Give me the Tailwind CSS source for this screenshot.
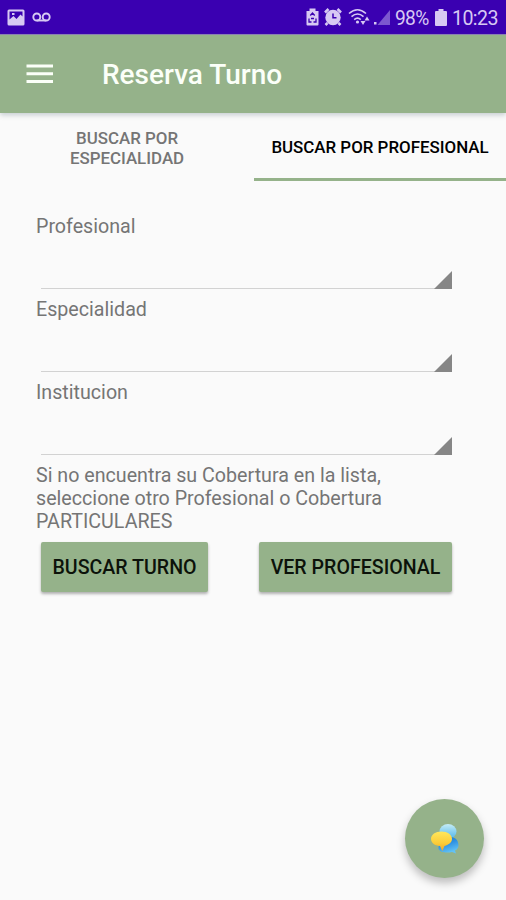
<!DOCTYPE html>
<html lang="es">
<head>
<meta charset="utf-8">
<title>Reserva Turno</title>
<script src="https://cdn.jsdelivr.net/npm/@tailwindcss/browser@4"></script>
</head>
<body class="bg-[#fafafa]">
<div class="relative flex h-[900px] w-[506px] flex-col overflow-hidden bg-[#fafafa] font-['Roboto',sans-serif] text-[#757575]">
  <div class="flex h-[34px] shrink-0 items-center bg-[#3a00b1] pl-[7px] pr-2 text-[#d7c9f3]">
    <svg class="h-[17px] w-[18px]" viewBox="0 0 18 17"><path fill="currentColor" fill-rule="evenodd" d="M2 .5h14a1.500 1.500 0 0 1 1.500 1.500v13a1.500 1.500 0 0 1-1.500 1.500H2A1.500 1.500 0 0 1 .5 15V2A1.500 1.500 0 0 1 2 .5zM2.500 2.500v8l4-3.500 3 3 4-4.500 2 2v-5zM5 4h2.500v2H5z"/></svg>
    <svg class="ml-[7px] h-[11px] w-[19px]" viewBox="0 0 19 11" fill="none" stroke="currentColor" stroke-width="1.900"><circle cx="4.800" cy="5" r="3.500"/><circle cx="14.200" cy="5" r="3.500"/><path d="M4.800 8.500h9.400"/></svg>
    <div class="ml-auto flex items-center">
      <svg class="h-[18px] w-[13px]" viewBox="0 0 13 18"><path fill="currentColor" d="M3.500 .5h6V3h3v13.500a1 1 0 0 1-1 1h-10a1 1 0 0 1-1-1V3h3z"/><path fill="none" stroke="#3a00b1" stroke-width="1.300" d="M4.300 7.500L6.500 5l2.200 2.500M3 10.500v3.500h2.500M10 10.500v3.500H7.500M5 10.500h3"/></svg>
      <svg class="ml-[5px] h-[18px] w-[18px]" viewBox="0 0 18 18"><circle cx="9" cy="9.500" r="7.700" fill="currentColor"/><path fill="none" stroke="currentColor" stroke-width="2.500" d="M1 4.500L4.500 1M17 4.500L13.500 1M3.500 15L1.500 17M14.500 15l2 2"/><path fill="none" stroke="#3a00b1" stroke-width="1.500" d="M9 5.500v4.200h3.500"/></svg>
      <svg class="ml-[6px] h-[18px] w-[43px]" viewBox="0 0 43 18"><g fill="none" stroke="currentColor" stroke-width="1.600"><path d="M1 5.500Q9.500-2 18 5.500M3.500 8.700q6-5.400 12 0M6.200 11.700q3.300-3 6.600 0"/></g><circle cx="9.500" cy="14" r="1.600" fill="currentColor"/><path fill="currentColor" d="M12.500 13h5L15 17zM16.500 12.500h5L19 8.500zM26 14h2.500v2.500H26z"/><path fill="#7d57cf" d="M29.500 17L42 2v15z"/></svg>
      <span class="ml-[4px] w-[36px] whitespace-nowrap text-[20px] leading-6 tracking-[-0.7px]"><span class="inline-block origin-left translate-y-px scale-x-[.96]">98%</span></span>
      <svg class="ml-[4px] h-[17px] w-[12px]" viewBox="0 0 12 17"><path fill="currentColor" d="M3.500 0h5v2H11a1 1 0 0 1 1 1V16a1 1 0 0 1-1 1H1a1 1 0 0 1-1-1V3a1 1 0 0 1 1-1h2.500z"/></svg>
      <span class="ml-[5px] w-[46px] whitespace-nowrap text-[20px] leading-6 tracking-[-0.6px]"><span class="inline-block origin-left translate-y-px scale-x-[.98]">10:23</span></span>
    </div>
  </div>
  <header class="relative flex h-[79px] shrink-0 items-center border-t border-[#8a80b0] bg-[#95b28a] pl-[26px] text-[#fbfff8] shadow-[0_2px_5px_rgba(70,100,110,.3)]">
    <svg class="mb-[1px] h-[20px] w-[27px]" viewBox="0 0 27 20" fill="currentColor"><path d="M.5 .5h27v3H.5zM.5 8.200h27v3H.5zM.5 15.900h27v3H.5z"/></svg>
    <h1 class="ml-[49px] mt-[2px] whitespace-nowrap text-[28px] font-medium leading-8">Reserva Turno</h1>
  </header>
  <nav class="flex h-[68px] shrink-0 text-center text-[16.900px] font-medium">
    <div class="flex w-[254px] items-center justify-center pt-[2px] leading-[20px]"><span>BUSCAR POR<br>ESPECIALIDAD</span></div>
    <div class="flex flex-1 items-center justify-center whitespace-nowrap border-b-[3px] border-[#95b28a] pt-[4px] text-black"><span>BUSCAR POR PROFESIONAL</span></div>
  </nav>
  <main class="flex flex-col pl-9 pt-[34px] text-[19.660px] leading-[23px]">
    <div class="h-[83px]"><label>Profesional</label><div class="ml-[5px] flex h-[51px] w-[411px] items-end justify-end border-b border-[#d2d2d2]"><svg class="-mb-px h-[18px] w-[18px]" viewBox="0 0 18 18"><path fill="#868686" d="M0 18L18 0v18z"/></svg></div></div>
    <div class="h-[83px]"><label>Especialidad</label><div class="ml-[5px] flex h-[51px] w-[411px] items-end justify-end border-b border-[#d2d2d2]"><svg class="-mb-px h-[18px] w-[18px]" viewBox="0 0 18 18"><path fill="#868686" d="M0 18L18 0v18z"/></svg></div></div>
    <div class="h-[83px]"><label>Institucion</label><div class="ml-[5px] flex h-[51px] w-[411px] items-end justify-end border-b border-[#d2d2d2]"><svg class="-mb-px h-[18px] w-[18px]" viewBox="0 0 18 18"><path fill="#868686" d="M0 18L18 0v18z"/></svg></div></div>
    <p class="whitespace-nowrap">Si no encuentra su Cobertura en la lista,<br>seleccione otro Profesional o Cobertura<br>PARTICULARES</p>
    <div class="ml-[5px] mt-[9px] flex gap-[51px] text-[19.600px] font-medium text-[#0c120a]">
      <button class="h-[50px] w-[167px] whitespace-nowrap rounded-[2px] bg-[#95b28a] pt-px shadow-[0_2px_3px_rgba(0,0,0,.3)]">BUSCAR TURNO</button>
      <button class="h-[50px] w-[193px] whitespace-nowrap rounded-[2px] bg-[#95b28a] pt-px shadow-[0_2px_3px_rgba(0,0,0,.3)]">VER PROFESIONAL</button>
    </div>
  </main>
  <button aria-label="Chat" class="absolute left-[405px] top-[799px] flex h-[79px] w-[79px] items-center justify-center rounded-full bg-[#95b28a] shadow-[0_5px_9px_rgba(0,0,0,.25)]">
    <svg class="h-[32px] w-[30px]" viewBox="0 0 30 32">
      <defs>
        <linearGradient id="sky" x1="0" y1="0" x2="0" y2="1"><stop offset="0" stop-color="#c5ecf6"/><stop offset="1" stop-color="#4db5ea"/></linearGradient>
        <linearGradient id="sea" x1="0" y1="0" x2=".4" y2="1"><stop offset="0" stop-color="#1670d2"/><stop offset=".5" stop-color="#2e91e2"/><stop offset="1" stop-color="#62c2f4"/></linearGradient>
        <linearGradient id="sun" x1="0" y1="0" x2="0" y2="1"><stop offset="0" stop-color="#ffe75c"/><stop offset=".6" stop-color="#fccc38"/><stop offset="1" stop-color="#efa42a"/></linearGradient>
      </defs>
      <ellipse cx="18" cy="8.500" rx="8.500" ry="7.500" fill="url(#sky)"/>
      <path fill="url(#sea)" d="M20 14c6 0 8.500 4 8.500 8.500 0 2.500-1.500 4-3.500 5l1 3-4-1.500c-5 1.200-12 .5-13.500-3C8 20 14 14 20 14z"/>
      <path fill="url(#sun)" d="M11.500 8.500c6 0 10.500 3.200 10.500 7.300 0 3.400-3 6.200-7.500 7.100L12.300 28l-2.300-4.900C4.700 22.800 1 19.800 1 15.800 1 11.700 5.500 8.500 11.500 8.500z"/>
    </svg>
  </button>
</div>
</body>
</html>
